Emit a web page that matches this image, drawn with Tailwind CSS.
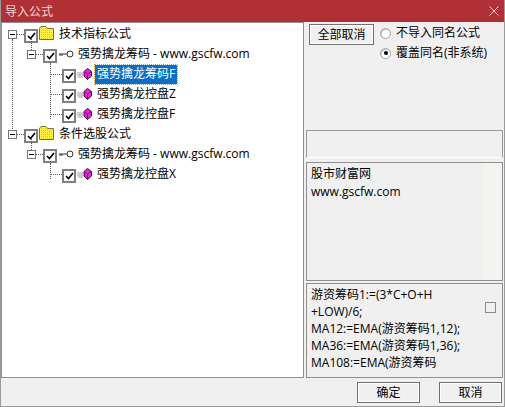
<!DOCTYPE html>
<html>
<head>
<meta charset="utf-8">
<script src="https://cdn.jsdelivr.net/npm/@tailwindcss/browser@4"></script>
</head>
<body class="bg-[#f0f0f0]">
<div class="flex flex-col w-[505px] h-[407px] overflow-hidden bg-[#f0f0f0] text-black text-[12px] border-x border-b border-[#9a9a9a] font-['Open_Sans','Noto_Sans_CJK_SC',sans-serif]">

    <!-- 点阵填充 -->
    <svg width="0" height="0" class="absolute">
        <defs>
            <pattern id="dither" width="2" height="2" patternUnits="userSpaceOnUse">
                <rect width="2" height="2" fill="#fff23a"/>
                <rect width="1" height="1" fill="#c8c84a"/>
            </pattern>
        </defs>
    </svg>

    <!-- 标题栏 -->
    <div class="flex items-center justify-between h-[22px] -mx-px pl-[5px] pr-[6px] bg-[#b13035] text-[#f3d9da]">
        <span class="font-['Noto_Sans_CJK_SC',sans-serif]">导入公式</span>
        <svg width="10" height="10" viewBox="0 0 10 10" stroke="#f3d9da" fill="none"><path d="M0.5 0.5L9.5 9.5M9.5 0.5L0.5 9.5"/></svg>
    </div>

    <div class="flex flex-1 min-h-0 pr-[1px]">
        <!-- 公式树 -->
        <div class="relative w-[303px] h-[356px] bg-white border border-[#8f8f8f] pt-[1px] whitespace-nowrap">
            <!-- 虚线 -->
            <div class="absolute left-[10px] top-[16px] h-[96px] border-l border-dotted border-[#555]"></div>
            <div class="absolute left-[29px] top-[16px] h-[17px] border-l border-dotted border-[#555]"></div>
            <div class="absolute left-[48px] top-[40px] h-[56px] border-l border-dotted border-[#555]"></div>
            <div class="absolute left-[29px] top-[116px] h-[17px] border-l border-dotted border-[#555]"></div>
            <div class="absolute left-[48px] top-[140px] h-[16px] border-l border-dotted border-[#555]"></div>

            <!-- 技术指标公式 -->
            <div class="flex items-center h-5 pl-[6px]">
                <span class="relative z-10 flex items-center justify-center w-[9px] h-[9px] border border-[#777] bg-white"><span class="w-[5px] h-px bg-black"></span></span>
                <span class="w-[7px] border-t border-dotted border-[#555]"></span>
                <span class="flex items-center justify-center w-[14px] h-[14px] border-2 border-[#808080] bg-white mt-[3px]"><svg width="9" height="8" viewBox="0 0 9 8" fill="none" stroke="#000" stroke-width="1.6"><path d="M1 4L3.500 6.500L8 1"/></svg></span>
                <svg class="ml-[1px] mb-[2px]" width="16" height="14" viewBox="0 0 16 14"><path d="M0.500 13.500V2.500L2 0.500H7L8.500 2.500H14.500V13.500Z" fill="url(#dither)" stroke="#77704a"/></svg>
                <span class="ml-[4px] -mt-px">技术指标公式</span>
            </div>
            <div class="flex items-center h-5 pl-[25px]">
                <span class="relative z-10 flex items-center justify-center w-[9px] h-[9px] border border-[#777] bg-white"><span class="w-[5px] h-px bg-black"></span></span>
                <span class="w-[7px] border-t border-dotted border-[#555]"></span>
                <span class="flex items-center justify-center w-[14px] h-[14px] border-2 border-[#808080] bg-white mt-[3px]"><svg width="9" height="8" viewBox="0 0 9 8" fill="none" stroke="#000" stroke-width="1.6"><path d="M1 4L3.500 6.500L8 1"/></svg></span>
                <svg class="ml-[2px]" width="15" height="8" viewBox="0 0 15 8" fill="none" stroke="#333"><circle cx="11" cy="4" r="3"/><path d="M0 4H8M1 4V6M3 4V6"/></svg>
                <span class="ml-[4px] -mt-px">强势擒龙筹码 - www.gscfw.com</span>
            </div>
            <div class="flex items-center h-5 pl-[48px]">
                <span class="w-[12px] border-t border-dotted border-[#555]"></span>
                <span class="flex items-center justify-center w-[14px] h-[14px] border-2 border-[#808080] bg-white mt-[3px]"><svg width="9" height="8" viewBox="0 0 9 8" fill="none" stroke="#000" stroke-width="1.6"><path d="M1 4L3.500 6.500L8 1"/></svg></span>
                <svg class="ml-[1px]" width="15" height="12" viewBox="0 0 15 12"><path d="M0 5H6M0 7H6M1 9H6" stroke="#999"/><path d="M10.500 0.500L14.500 3.500V8L10.500 11.500L7 8V3.500Z" fill="#f020d8" stroke="#301030"/><path d="M7 3.500L10.500 6L14.500 3.500M10.500 6V11" stroke="#7a1080" fill="none"/></svg>
                <span class="ml-[3px] px-[2px] h-[19px] flex items-center bg-[#0a6fc9] text-white outline-1 outline-dotted outline-[#e0a030]">强势擒龙筹码F</span>
            </div>
            <div class="flex items-center h-5 pl-[48px]">
                <span class="w-[12px] border-t border-dotted border-[#555]"></span>
                <span class="flex items-center justify-center w-[14px] h-[14px] border-2 border-[#808080] bg-white mt-[3px]"><svg width="9" height="8" viewBox="0 0 9 8" fill="none" stroke="#000" stroke-width="1.6"><path d="M1 4L3.500 6.500L8 1"/></svg></span>
                <svg class="ml-[1px]" width="15" height="12" viewBox="0 0 15 12"><path d="M0 5H6M0 7H6M1 9H6" stroke="#999"/><path d="M10.500 0.500L14.500 3.500V8L10.500 11.500L7 8V3.500Z" fill="#f020d8" stroke="#301030"/><path d="M7 3.500L10.500 6L14.500 3.500M10.500 6V11" stroke="#7a1080" fill="none"/></svg>
                <span class="ml-[5px] -mt-px">强势擒龙控盘Z</span>
            </div>
            <div class="flex items-center h-5 pl-[48px]">
                <span class="w-[12px] border-t border-dotted border-[#555]"></span>
                <span class="flex items-center justify-center w-[14px] h-[14px] border-2 border-[#808080] bg-white mt-[3px]"><svg width="9" height="8" viewBox="0 0 9 8" fill="none" stroke="#000" stroke-width="1.6"><path d="M1 4L3.500 6.500L8 1"/></svg></span>
                <svg class="ml-[1px]" width="15" height="12" viewBox="0 0 15 12"><path d="M0 5H6M0 7H6M1 9H6" stroke="#999"/><path d="M10.500 0.500L14.500 3.500V8L10.500 11.500L7 8V3.500Z" fill="#f020d8" stroke="#301030"/><path d="M7 3.500L10.500 6L14.500 3.500M10.500 6V11" stroke="#7a1080" fill="none"/></svg>
                <span class="ml-[5px] -mt-px">强势擒龙控盘F</span>
            </div>

            <!-- 条件选股公式 -->
            <div class="flex items-center h-5 pl-[6px]">
                <span class="relative z-10 flex items-center justify-center w-[9px] h-[9px] border border-[#777] bg-white"><span class="w-[5px] h-px bg-black"></span></span>
                <span class="w-[7px] border-t border-dotted border-[#555]"></span>
                <span class="flex items-center justify-center w-[14px] h-[14px] border-2 border-[#808080] bg-white mt-[3px]"><svg width="9" height="8" viewBox="0 0 9 8" fill="none" stroke="#000" stroke-width="1.6"><path d="M1 4L3.500 6.500L8 1"/></svg></span>
                <svg class="ml-[1px] mb-[2px]" width="16" height="14" viewBox="0 0 16 14"><path d="M0.500 13.500V2.500L2 0.500H7L8.500 2.500H14.500V13.500Z" fill="url(#dither)" stroke="#77704a"/></svg>
                <span class="ml-[4px] -mt-px">条件选股公式</span>
            </div>
            <div class="flex items-center h-5 pl-[25px]">
                <span class="relative z-10 flex items-center justify-center w-[9px] h-[9px] border border-[#777] bg-white"><span class="w-[5px] h-px bg-black"></span></span>
                <span class="w-[7px] border-t border-dotted border-[#555]"></span>
                <span class="flex items-center justify-center w-[14px] h-[14px] border-2 border-[#808080] bg-white mt-[3px]"><svg width="9" height="8" viewBox="0 0 9 8" fill="none" stroke="#000" stroke-width="1.6"><path d="M1 4L3.500 6.500L8 1"/></svg></span>
                <svg class="ml-[2px]" width="15" height="8" viewBox="0 0 15 8" fill="none" stroke="#333"><circle cx="11" cy="4" r="3"/><path d="M0 4H8M1 4V6M3 4V6"/></svg>
                <span class="ml-[4px] -mt-px">强势擒龙筹码 - www.gscfw.com</span>
            </div>
            <div class="flex items-center h-5 pl-[48px]">
                <span class="w-[12px] border-t border-dotted border-[#555]"></span>
                <span class="flex items-center justify-center w-[14px] h-[14px] border-2 border-[#808080] bg-white mt-[3px]"><svg width="9" height="8" viewBox="0 0 9 8" fill="none" stroke="#000" stroke-width="1.6"><path d="M1 4L3.500 6.500L8 1"/></svg></span>
                <svg class="ml-[1px]" width="15" height="12" viewBox="0 0 15 12"><path d="M0 5H6M0 7H6M1 9H6" stroke="#999"/><path d="M10.500 0.500L14.500 3.500V8L10.500 11.500L7 8V3.500Z" fill="#f020d8" stroke="#301030"/><path d="M7 3.500L10.500 6L14.500 3.500M10.500 6V11" stroke="#7a1080" fill="none"/></svg>
                <span class="ml-[5px] -mt-px">强势擒龙控盘X</span>
            </div>
        </div>

        <!-- 右侧 -->
        <div class="flex flex-col flex-1 min-w-0 pl-[2px]">
            <div class="flex h-[108px] pt-[2px] pl-[3px]">
                <button class="w-[65px] h-[21px] border border-[#707070] bg-[#f0f0f0] shadow-[inset_0_0_0_1px_#fff]">全部取消</button>
                <div class="ml-[6px] flex flex-col">
                    <div class="flex items-center h-5 -mt-px">
                        <span class="w-[11px] h-[11px] rounded-full border border-[#a0a0a0] bg-white shadow-[inset_1px_1px_0_#ccc]"></span>
                        <span class="ml-[5px]">不导入同名公式</span>
                    </div>
                    <div class="flex items-center h-5">
                        <span class="flex items-center justify-center w-[11px] h-[11px] rounded-full border border-[#a0a0a0] bg-white shadow-[inset_1px_1px_0_#ccc]"><span class="w-[4px] h-[4px] rounded-full bg-black"></span></span>
                        <span class="ml-[5px]">覆盖同名(非系统)</span>
                    </div>
                </div>
            </div>
            <div class="h-[28px] border border-[#999] border-b-white"></div>
            <div class="relative h-[119px] mt-[4px] px-[4px] pt-[2px] border border-[#8f8f8f] leading-[18px]">
                <div>股市财富网</div>
                <div>www.gscfw.com</div>
                <!-- 右边浅色条 -->
                <div class="absolute top-0 bottom-0 right-0 w-[19px] bg-[#f4f3f0]"></div>
            </div>
            <div class="relative h-[95px] mt-[2px] pl-[4px] pt-[2px] border border-[#8f8f8f] leading-[17px] whitespace-nowrap">
                <div>游资筹码1:=(3*C+O+H</div>
                <div>+LOW)/6;</div>
                <div>MA12:=EMA(游资筹码1,12);</div>
                <div>MA36:=EMA(游资筹码1,36);</div>
                <div>MA108:=EMA(游资筹码</div>
                <span class="absolute left-[178px] top-[18px] w-[11px] h-[11px] border border-[#8a8a8a] bg-[#f0f0f0]"></span>
            </div>
        </div>
    </div>

    <!-- 底部按钮 -->
    <div class="flex justify-end gap-[19px] h-[28px] pt-[4px] pr-[2px]">
        <button class="w-[63px] h-[21px] border border-[#707070] shadow-[inset_0_0_0_1px_#fff]">确定</button>
        <button class="w-[63px] h-[21px] border border-[#707070] shadow-[inset_0_0_0_1px_#fff]">取消</button>
    </div>
</div>
</body>
</html>
